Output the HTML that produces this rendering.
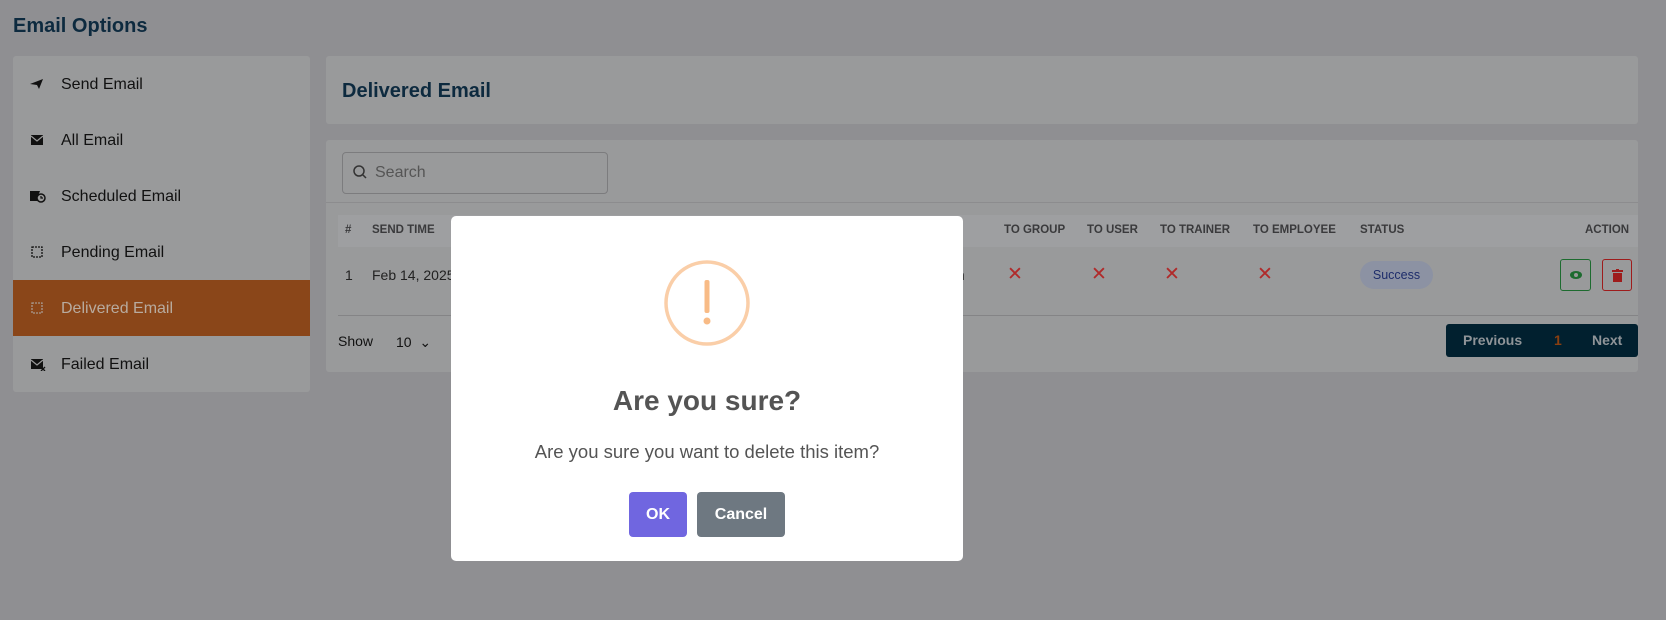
<!DOCTYPE html>
<html><head><style>
*{margin:0;padding:0;box-sizing:border-box}
body{width:1666px;height:620px;background:#8f8f92;font-family:"Liberation Sans",sans-serif;position:relative;overflow:hidden;color:#1a1a1a}
.a{position:absolute}
.card{position:absolute;background:#999a9b;border-radius:3px}
.item{position:absolute;left:13px;width:297px;height:56px;font-size:16px;color:#111}
.item span{position:absolute;left:48px;top:20px}
.item i{position:absolute;left:17px;top:21px;width:14px;height:14px}
.th{position:absolute;top:224px;font-size:11.5px;font-weight:bold;color:#3a3a3c}
.x{position:absolute;top:265px;color:#b02a2a;font-size:19px;line-height:20px}
</style></head><body>
<div class="a" style="left:13px;top:15px;font-size:20px;font-weight:bold;color:#0d2a3f">Email Options</div>

<div class="card" style="left:13px;top:56px;width:297px;height:336px"></div>
<div class="item" style="top:56px"><i><svg width="14" height="14" viewBox="0 0 14 14"><path d="M0 7 L13 2 L9 12 L7 8 Z" fill="#111"/></svg></i><span>Send Email</span></div>
<div class="item" style="top:112px"><i><svg width="14" height="14" viewBox="0 0 14 14"><rect x="1" y="2" width="12" height="10" fill="#111"/><path d="M1 3 L7 8 L13 3" stroke="#999" stroke-width="1.2" fill="none"/></svg></i><span>All Email</span></div>
<div class="item" style="top:168px"><i><svg width="16" height="14" viewBox="0 0 16 14"><path d="M0 2 L10 2 L8 7 L10 12 L0 12 Z" fill="#111"/><circle cx="11" cy="9" r="4" fill="#999" stroke="#111" stroke-width="1.5"/><path d="M11 7 V9 H13" stroke="#111" stroke-width="1.2" fill="none"/></svg></i><span>Scheduled Email</span></div>
<div class="item" style="top:224px"><i><svg width="14" height="14" viewBox="0 0 14 14"><rect x="2" y="2" width="10" height="10" fill="none" stroke="#111" stroke-width="1.3" stroke-dasharray="2 1"/></svg></i><span>Pending Email</span></div>
<div class="item" style="top:280px;background:#8a4619"><i><svg width="14" height="14" viewBox="0 0 14 14"><rect x="2" y="2" width="10" height="10" fill="none" stroke="#a89a8f" stroke-width="1.3" stroke-dasharray="2 1"/></svg></i><span style="color:#b8ab9f">Delivered Email</span></div>
<div class="item" style="top:336px"><i><svg width="16" height="14" viewBox="0 0 16 14"><rect x="1" y="2" width="12" height="10" fill="#111"/><path d="M1 3 L7 8 L13 3" stroke="#999" stroke-width="1.2" fill="none"/><path d="M11 10 L15 14 M15 10 L11 14" stroke="#111" stroke-width="1.3"/></svg></i><span>Failed Email</span></div>

<div class="card" style="left:326px;top:56px;width:1312px;height:68px"></div>
<div class="a" style="left:342px;top:80px;font-size:20px;font-weight:bold;color:#0d2a3f">Delivered Email</div>

<div class="card" style="left:326px;top:140px;width:1312px;height:232px"></div>
<div class="a" style="left:342px;top:152px;width:266px;height:42px;border:1px solid #7c7c7e;border-radius:4px"></div>
<svg class="a" style="left:352px;top:164px" width="16" height="16" viewBox="0 0 16 16"><circle cx="7" cy="7" r="5" fill="none" stroke="#333" stroke-width="1.5"/><path d="M11 11 L14 14" stroke="#333" stroke-width="1.5"/></svg>
<div class="a" style="left:375px;top:164px;font-size:16px;color:#555">Search</div>
<div class="a" style="left:326px;top:202px;width:1312px;height:1px;background:#8c8c8e"></div>
<div class="a" style="left:338px;top:215px;width:1300px;height:32px;background:#9e9fa1"></div>
<div class="th" style="left:345px">#</div>
<div class="th" style="left:372px">SEND TIME</div>
<div class="th" style="left:1004px">TO GROUP</div>
<div class="th" style="left:1087px">TO USER</div>
<div class="th" style="left:1160px">TO TRAINER</div>
<div class="th" style="left:1253px">TO EMPLOYEE</div>
<div class="th" style="left:1360px">STATUS</div>
<div class="th" style="left:1585px">ACTION</div>
<div class="a" style="left:345px;top:267px;font-size:14px;color:#222">1</div>
<div class="a" style="left:372px;top:267px;font-size:14px;color:#222">Feb 14, 2025</div>
<div class="a" style="left:953px;top:267px;font-size:14px;color:#222">m</div>
<div class="x" style="left:1007px">✕</div>
<div class="x" style="left:1091px">✕</div>
<div class="x" style="left:1164px">✕</div>
<div class="x" style="left:1257px">✕</div>
<div class="a" style="left:1360px;top:261px;width:73px;height:28px;border-radius:14px;background:#8c92a3;color:#1e2d6b;font-size:12.5px;text-align:center;line-height:28px">Success</div>
<div class="a" style="left:1560px;top:259px;width:31px;height:32px;border:1px solid #1d6b2f;border-radius:3px"><svg style="position:absolute;left:8px;top:10px" width="14" height="10" viewBox="0 0 14 10"><ellipse cx="7" cy="5" rx="6" ry="4" fill="#1d6b2f"/><circle cx="7" cy="5" r="2" fill="#999"/></svg></div>
<div class="a" style="left:1602px;top:259px;width:30px;height:32px;border:1px solid #9e1c1c;border-radius:3px"><svg style="position:absolute;left:9px;top:9px" width="11" height="13" viewBox="0 0 11 13"><rect x="0" y="1" width="11" height="2" fill="#9e1c1c"/><rect x="4" y="0" width="3" height="2" fill="#9e1c1c"/><rect x="1" y="4" width="9" height="9" fill="#9e1c1c"/></svg></div>
<div class="a" style="left:338px;top:315px;width:1300px;height:1px;background:#848486"></div>
<div class="a" style="left:338px;top:333px;font-size:14px;color:#111">Show</div>
<div class="a" style="left:396px;top:334px;font-size:14px;color:#111">10 &nbsp;⌄</div>
<div class="a" style="left:1446px;top:324px;width:192px;height:33px;background:#01202f;border-radius:3px;font-size:14px;font-weight:bold;color:#8f9498;line-height:33px">
<span class="a" style="left:17px">Previous</span><span class="a" style="left:108px;color:#8a3f10">1</span><span class="a" style="left:146px">Next</span></div>

<div class="a" style="left:451px;top:216px;width:512px;height:345px;background:#fff;border-radius:5px">
<svg class="a" style="left:211px;top:42px" width="90" height="90" viewBox="0 0 90 90"><circle cx="45" cy="45" r="41" fill="none" stroke="#facea8" stroke-width="3.5"/><rect x="42.5" y="22" width="5" height="33" rx="2" fill="#f8bb86"/><circle cx="45" cy="63" r="3.5" fill="#f8bb86"/></svg>
<div class="a" style="left:0;width:512px;top:169px;text-align:center;font-size:28px;font-weight:bold;color:#545454">Are you sure?</div>
<div class="a" style="left:0;width:512px;top:225px;text-align:center;font-size:18.5px;color:#545454">Are you sure you want to delete this item?</div>
<div class="a" style="left:178px;top:276px;width:58px;height:45px;background:#7066e0;border-radius:4px;color:#fff;font-size:16px;font-weight:bold;text-align:center;line-height:45px">OK</div>
<div class="a" style="left:246px;top:276px;width:88px;height:45px;background:#6e7881;border-radius:4px;color:#fff;font-size:16px;font-weight:bold;text-align:center;line-height:45px">Cancel</div>
</div>
</body></html>
